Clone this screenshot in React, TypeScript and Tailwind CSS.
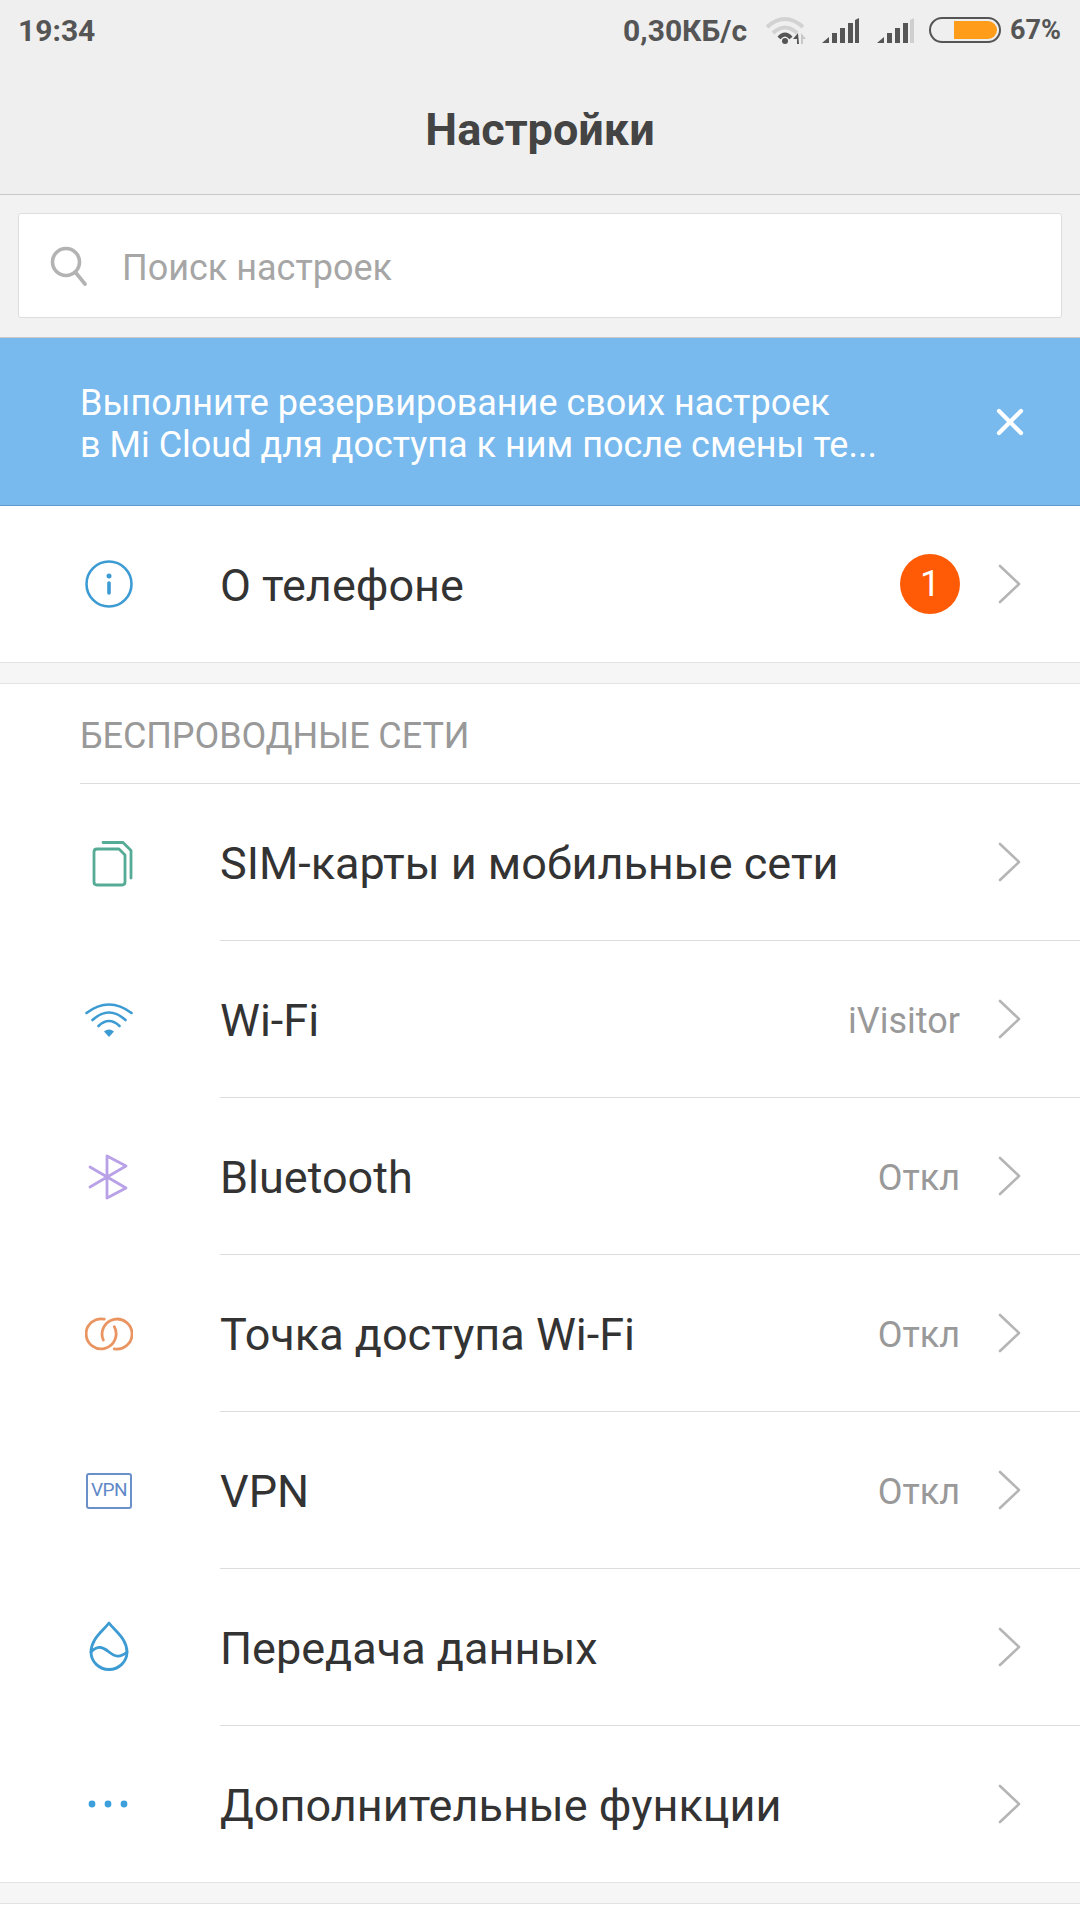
import React from "react";

const Chevron = () => (
  <svg width="24" height="40" viewBox="0 0 24 40" className="block" fill="none" stroke="#b5b5b5" strokeWidth="2.6" strokeLinecap="round" strokeLinejoin="round">
    <path d="M3 2 L22 20 L3 38" />
  </svg>
);

const InfoIcon = () => (
  <svg width="48" height="48" viewBox="0 0 48 48" fill="none" stroke="#3d9bd3" strokeWidth="2.6" strokeLinecap="round">
    <circle cx="24" cy="24" r="22.5" />
    <circle cx="24" cy="16" r="2.5" fill="#3d9bd3" stroke="none" />
    <path d="M24 23 V33" strokeWidth="3.6" />
  </svg>
);

const SimIcon = () => (
  <svg width="44" height="46" viewBox="0 0 44 46" className="mt-[3px] ml-[6px]" fill="none" stroke="#55ab95" strokeWidth="2.8" strokeLinecap="round" strokeLinejoin="round">
    <path d="M4 11 Q4 8 7 8 H29 L35 14 V41 Q35 44 32 44 H7 Q4 44 4 41 Z" />
    <path d="M13 1.5 H33 L41 9.5 V37" />
  </svg>
);

const WifiIcon = () => (
  <svg width="48" height="36" viewBox="0 0 48 36" fill="none" stroke="#3d9bd3" strokeWidth="2.6" strokeLinecap="round">
    <path d="M1.5 11 Q24 -6 46.5 11" />
    <path d="M7.5 18 Q24 3 40.5 18" />
    <path d="M13.5 24 Q24 14 34.5 24" />
    <path d="M19 29.5 Q24 25.5 29 29.5 L24 35 Z" fill="#3d9bd3" stroke="none" />
  </svg>
);

const BluetoothIcon = () => (
  <svg width="42" height="46" viewBox="0 0 42 46" fill="none" stroke="#b9a1e8" strokeWidth="2.8" strokeLinecap="round" strokeLinejoin="round">
    <path d="M2 13 L38 34 L19 44 V2 L38 12 L2 33" />
  </svg>
);

const HotspotIcon = () => (
  <svg width="48" height="34" viewBox="0 0 48 34" fill="none" stroke="#ea9561" strokeWidth="2.8" strokeLinecap="round">
    <path d="M19.3 2.2 A15 15 0 1 0 29.3 9.7" />
    <path d="M29.3 31.8 A15 15 0 1 0 18.3 23" />
  </svg>
);

const VpnIcon = () => (
  <div className="flex h-[36px] w-[46px] items-center justify-center rounded-[3px] border-2 border-[#6a90c9] text-[19px] font-normal tracking-[-0.5px] text-[#5f88c9]">
    VPN
  </div>
);

const DataIcon = () => (
  <svg width="40" height="50" viewBox="0 0 40 50" className="mb-[3px]" fill="none" stroke="#3d9bd3" strokeWidth="2.8" strokeLinecap="round" strokeLinejoin="round">
    <path d="M20 2 C27 11 38 18 38 31 A18 17.5 0 0 1 2 31 C2 18 13 11 20 2 Z" />
    <path d="M2 31 C9 24 14 26 20 31 C26 36 31 37 38 31" />
  </svg>
);

const DotsIcon = () => (
  <svg width="42" height="10" viewBox="0 0 42 10" fill="#3da0dc">
    <circle cx="4" cy="5" r="3.4" />
    <circle cx="20" cy="5" r="3.4" />
    <circle cx="36" cy="5" r="3.4" />
  </svg>
);

const SignalIcon = ({ dim }: { dim?: boolean }) => (
  <svg width="37" height="25" viewBox="0 0 37 25">
    <path d="M0 25 L7 19 V25 Z" fill="#555" />
    <rect x="10" y="15" width="5" height="10" fill="#555" />
    <rect x="18" y="10" width="5" height="15" fill="#555" />
    <rect x="26" y="5" width="5" height="20" fill="#555" />
    <path d="M33 2 L37 0 V25 H33 Z" fill={dim ? "#cfcfcf" : "#555"} />
  </svg>
);

const StatusWifi = () => (
  <svg width="40" height="28" viewBox="0 0 40 28" fill="none" strokeLinecap="butt">
    <path d="M1 11 Q19 -5 37 11" stroke="#d2d2d2" strokeWidth="4" />
    <path d="M7 17 Q19 6 31 17" stroke="#d2d2d2" strokeWidth="4" />
    <path d="M13 22 Q19 15 25 22" stroke="#555" strokeWidth="4" />
    <circle cx="19" cy="25" r="3" fill="#555" />
    <path d="M32 17 L27 23 H31 V28 H33 Z" fill="#555" />
    <path d="M35 17 V28 H37 V23 H40 Z" fill="#c8c8c8" />
  </svg>
);

const Battery = () => (
  <div className="relative h-[26px] w-[72px] rounded-[13px] border-2 border-[#555]">
    <div className="absolute top-[2px] right-[2px] h-[18px] w-[43px] rounded-r-[9px] bg-[#ff9d1b]" />
  </div>
);

type RowProps = {
  icon: React.ReactNode;
  title: string;
  value?: string;
  badge?: string;
  inset?: boolean;
};

const Row = ({ icon, title, value, badge, inset = true }: RowProps) => (
  <div className={`flex items-stretch bg-white ${inset ? "h-[157px]" : "h-[156px]"}`}>
    <div className="flex w-[220px] shrink-0 items-center pl-[84px]">
      <div className="flex w-[50px] items-center justify-center">{icon}</div>
    </div>
    <div className={`flex flex-1 items-center pr-[59px] ${inset ? "border-b border-[#dcdcdc]" : ""}`}>
      <span className="flex-1 pt-[3px] text-[45px] text-[#333333]">{title}</span>
      {value && <span className="mr-[37px] pt-[3px] text-[36px] text-[#999999]">{value}</span>}
      {badge && (
        <span className="mr-[37px] flex h-[60px] w-[60px] items-center justify-center rounded-full bg-[#ff5a05] text-[36px] text-white">
          {badge}
        </span>
      )}
      <Chevron />
    </div>
  </div>
);

const Gap = () => <div className="h-[22px] border-y border-[#e3e3e3] bg-[#f6f6f6]" />;

export default function App() {
  return (
    <div className="flex h-[1920px] w-[1080px] flex-col overflow-hidden bg-white font-['Roboto',sans-serif]">
      <header className="h-[195px] shrink-0 border-b border-[#c9c9c9] bg-[#efefef]">
        <div className="flex h-[60px] items-center justify-between pr-[19px] pl-[18px] text-[30px] font-bold text-[#555555]">
          <span>19:34</span>
          <div className="flex items-center">
            <span>0,30КБ/с</span>
            <span className="ml-[19px]"><StatusWifi /></span>
            <span className="ml-[16px]"><SignalIcon /></span>
            <span className="ml-[18px]"><SignalIcon dim /></span>
            <span className="ml-[15px]"><Battery /></span>
            <span className="ml-[9px] text-[27px]">67%</span>
          </div>
        </div>
        <h1 className="pt-[28px] text-center text-[45px] leading-[84px] font-bold text-[#444444]">Настройки</h1>
      </header>

      <div className="shrink-0 border-b border-[#c9c9c9] bg-[#f2f2f2] px-[18px] pt-[18px] pb-[19px]">
        <div className="flex h-[105px] items-center rounded-[3px] border border-[#dedede] bg-white pl-[31px]">
          <svg width="38" height="40" viewBox="0 0 38 40" fill="none" stroke="#b3b3b3" strokeWidth="3.6" strokeLinecap="round">
            <circle cx="16" cy="16" r="13.5" />
            <path d="M26 27 L35 38" />
          </svg>
          <span className="ml-[34px] pt-[4px] text-[36px] text-[#a6a6a6]">Поиск настроек</span>
        </div>
      </div>

      <div className="flex h-[168px] shrink-0 items-center border-b border-[#629bcb] bg-[#78b9ee] pr-[56px] pl-[80px]">
        <p className="flex-1 pt-[4px] text-[36px] leading-[42px] text-white">
          Выполните резервирование своих настроек
          <br />
          в Mi Cloud для доступа к ним после смены те...
        </p>
        <svg width="28" height="28" viewBox="0 0 28 28" stroke="#ffffff" strokeWidth="4.2" strokeLinecap="round">
          <path d="M3 3 L25 25 M25 3 L3 25" />
        </svg>
      </div>

      <Row icon={<InfoIcon />} title="О телефоне" badge="1" inset={false} />
      <Gap />

      <div className="ml-[80px] flex h-[100px] shrink-0 items-center border-b border-[#dcdcdc] pt-[5px] text-[36px] tracking-[-0.1px] text-[#999999]">
        БЕСПРОВОДНЫЕ СЕТИ
      </div>

      <Row icon={<SimIcon />} title="SIM-карты и мобильные сети" />
      <Row icon={<WifiIcon />} title="Wi-Fi" value="iVisitor" />
      <Row icon={<BluetoothIcon />} title="Bluetooth" value="Откл" />
      <Row icon={<HotspotIcon />} title="Точка доступа Wi-Fi" value="Откл" />
      <Row icon={<VpnIcon />} title="VPN" value="Откл" />
      <Row icon={<DataIcon />} title="Передача данных" />
      <Row icon={<DotsIcon />} title="Дополнительные функции" inset={false} />
      <Gap />
    </div>
  );
}
